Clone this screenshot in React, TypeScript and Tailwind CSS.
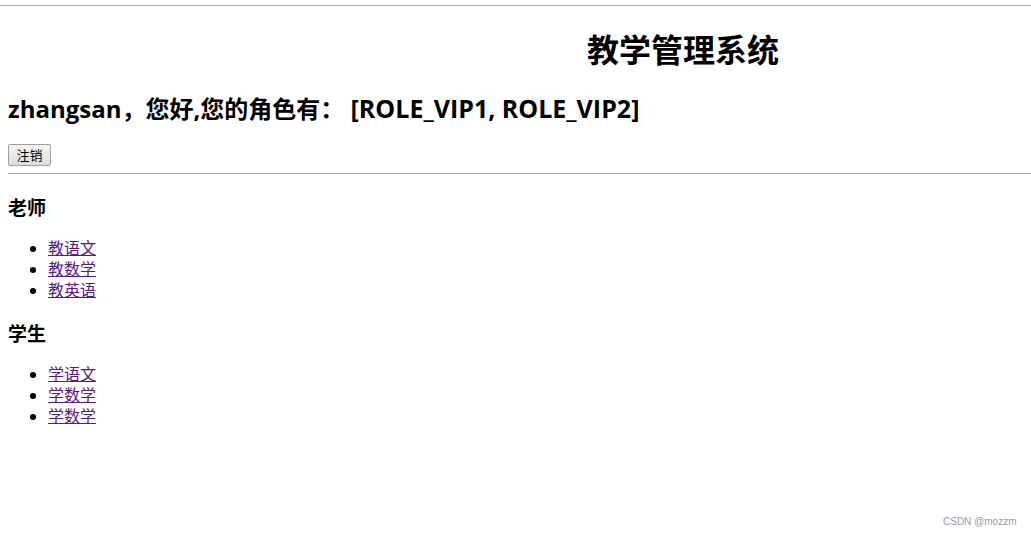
import React from "react";

const sans = { fontFamily: '"Open Sans", "Noto Sans CJK SC", sans-serif' };

function Link({ children }: { children: React.ReactNode }) {
  return (
    <li className="h-[21px] leading-[21px]">
      <a href="#" className="text-[#551a8b] underline">
        {children}
      </a>
    </li>
  );
}

export default function App() {
  return (
    <div
      className="relative w-[1031px] h-[536px] overflow-hidden bg-white text-black"
      style={sans}
    >
      <div className="mt-[5px] h-px w-full bg-[#a9a9a9]" />
      <h1 className="mt-[24px] pl-[587px] text-[32px] font-bold leading-[40px] whitespace-nowrap">
        教学管理系统
      </h1>
      <h2 className="mt-[22px] pl-[8px] text-[24px] font-bold leading-[32px] whitespace-nowrap">
        zhangsan，您好,您的角色有： <span className="text-[25px]">[ROLE_VIP1, ROLE_VIP2]</span>
      </h2>
      <div className="mt-[19px] pl-[8px]">
        <button className="block h-[22px] w-[43px] border border-[#a0a0a0] bg-gradient-to-b from-[#f6f6f6] to-[#dedede] text-[13px] leading-[20px] text-black rounded-[2px]">
          注销
        </button>
      </div>
      <div className="mt-[7px] ml-[8px] h-px bg-[#a0a0a0]" />
      <h3 className="mt-[22px] pl-[8px] text-[19px] font-bold leading-[24px]">老师</h3>
      <ul className="mt-[18px] pl-[48px] list-disc text-[16px]">
        <Link>教语文</Link>
        <Link>教数学</Link>
        <Link>教英语</Link>
      </ul>
      <h3 className="mt-[21px] pl-[8px] text-[19px] font-bold leading-[24px]">学生</h3>
      <ul className="mt-[18px] pl-[48px] list-disc text-[16px]">
        <Link>学语文</Link>
        <Link>学数学</Link>
        <Link>学数学</Link>
      </ul>
      <div
        className="absolute left-[943px] top-[515px] text-[10px] leading-[14px] text-[#9a9a9a]"
        style={{ fontFamily: '"Liberation Sans", Arial, sans-serif' }}
      >
        CSDN @mozzm
      </div>
    </div>
  );
}
